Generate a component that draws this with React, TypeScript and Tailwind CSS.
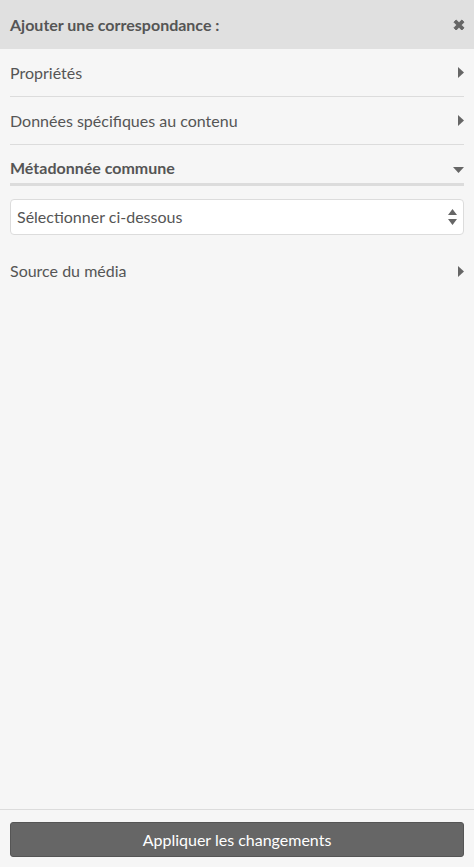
const font = { fontFamily: 'Lato, "Open Sans", sans-serif' };

function CaretRight() {
  return (
    <svg width="6" height="11" viewBox="0 0 6 11" className="shrink-0">
      <path d="M0 0 L6 5.5 L0 11 Z" fill="#666" />
    </svg>
  );
}

function CaretDown() {
  return (
    <svg width="11" height="6" viewBox="0 0 11 6" className="shrink-0">
      <path d="M0 0 L11 0 L5.5 6 Z" fill="#666" />
    </svg>
  );
}

function Row({ label, last }: { label: string; last?: boolean }) {
  return (
    <div
      className={`flex h-12 items-center justify-between text-base text-[#555] ${
        last ? '' : 'border-b border-[#dcdcdc]'
      }`}
    >
      <span>{label}</span>
      <CaretRight />
    </div>
  );
}

export default function App() {
  return (
    <div className="flex h-[867px] w-[474px] flex-col bg-[#f6f6f6]" style={font}>
      <div className="flex h-[49px] shrink-0 items-center justify-between bg-[#e0e0e0] pl-[10px] pr-2">
        <span className="text-base font-bold text-[#555]">Ajouter une correspondance :</span>
        <svg width="14" height="14" viewBox="0 0 14 14">
          <path
            d="M2 4.2 L4.2 2 L7 4.8 L9.8 2 L12 4.2 L9.2 7 L12 9.8 L9.8 12 L7 9.2 L4.2 12 L2 9.8 L4.8 7 Z"
            fill="#666"
            stroke="#666"
            strokeWidth="1"
            strokeLinejoin="round"
          />
        </svg>
      </div>

      <div className="flex-1 px-[10px]">
        <Row label="Propriétés" />
        <Row label="Données spécifiques au contenu" />

        <div className="flex h-[41px] items-end justify-between border-b-[3px] border-[#dcdcdc] pb-[3px] text-base font-bold text-[#555]">
          <span>Métadonnée commune</span>
          <span className="mb-[7px]">
            <CaretDown />
          </span>
        </div>

        <div className="mt-[13px] flex h-9 items-center justify-between rounded border border-[#dcdcdc] bg-white px-[6px] text-base text-[#555]">
          <span>Sélectionner ci-dessous</span>
          <svg width="9" height="16" viewBox="0 0 9 16">
            <path d="M4.5 0 L9 6 L0 6 Z M0 10 L9 10 L4.5 16 Z" fill="#666" />
          </svg>
        </div>

        <div className="mt-[12px]">
          <Row label="Source du média" last />
        </div>
      </div>

      <div className="shrink-0 border-t border-[#dcdcdc] px-[10px] pb-[10px] pt-3">
        <button className="flex h-[35px] w-full items-center justify-center rounded-[3px] border border-[#555] bg-[#666] text-base text-white">
          Appliquer les changements
        </button>
      </div>
    </div>
  );
}
